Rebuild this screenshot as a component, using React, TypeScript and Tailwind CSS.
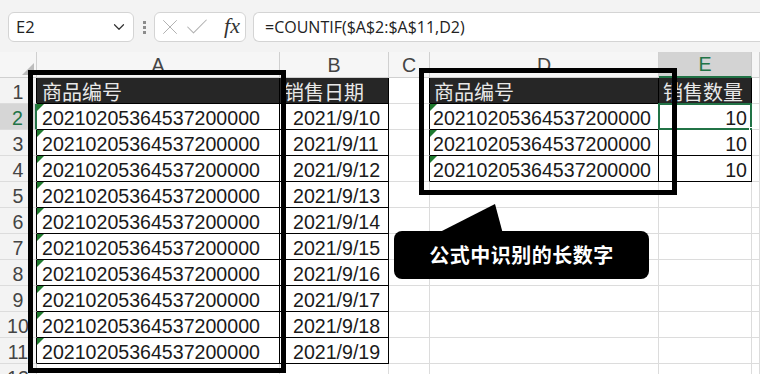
import { Check, ChevronDown, X } from "lucide-react";

const LONG = "20210205364537200000";
const CJK = "font-['Noto_Sans_CJK_SC',sans-serif]";
const NUM = "font-['Liberation_Sans','Noto_Sans_CJK_SC',sans-serif]";

type Col = { key: string; w: string };

const cols: Col[] = [
  { key: "A", w: "w-[243px]" },
  { key: "B", w: "w-[109px]" },
  { key: "C", w: "w-[41px]" },
  { key: "D", w: "w-[229px]" },
  { key: "E", w: "w-[93px]" },
  { key: "F", w: "flex-1" },
];

const rows = [1, 2, 3, 4, 5, 6, 7, 8, 9, 10, 11, 12];

// cells framed by thin black lines in the sheet
function inTable(col: string, r: number) {
  if ((col === "A" || col === "B") && r <= 11) return true;
  if ((col === "D" || col === "E") && r <= 4) return true;
  return false;
}

function nextCol(col: string) {
  const i = cols.findIndex((c) => c.key === col);
  return cols[i + 1]?.key ?? "";
}

function Marker() {
  return (
    <span className="absolute left-0 top-0 h-0 w-0 border-t-[7px] border-r-[7px] border-t-[#1f7a2e] border-r-transparent" />
  );
}

function Cell({ col, r }: { col: Col; r: number }) {
  const black = inTable(col.key, r) || inTable(nextCol(col.key), r);
  const header = r === 1 && col.key !== "C" && col.key !== "F";
  const right = black ? "border-r-black" : "border-r-[#dcdcdc]";
  const bottom = inTable(col.key, r) ? "border-b-black" : "border-b-[#dcdcdc]";

  let content: React.ReactNode = null;
  let align = "justify-start";
  let pad = "pl-[5px]";
  let marker = false;

  if (header) {
    const label = { A: "商品编号", B: "销售日期", D: "商品编号", E: "销售数量" }[col.key];
    content = <span className={`${CJK} text-[20px] leading-none text-[#e8e8e8] pb-[1px]`}>{label}</span>;
    pad = col.key === "A" ? "pl-[5px]" : "pl-[4px]";
  } else if (col.key === "A" && r <= 11) {
    content = LONG;
    marker = true;
  } else if (col.key === "B" && r <= 11) {
    content = `2021/9/${8 + r}`;
    pad = "pl-[13px]";
  } else if (col.key === "D" && r <= 4) {
    content = LONG;
    marker = true;
    pad = "pl-[3px]";
  } else if (col.key === "E" && r <= 4) {
    content = "10";
    align = "justify-end";
    pad = "pr-[4px]";
  }

  return (
    <div
      className={`relative ${col.w} shrink-0 h-[26px] flex items-end ${align} ${pad} border-r border-b ${right} ${bottom} ${
        header ? "bg-[#262626]" : "bg-white"
      } ${NUM} text-[19.6px] leading-none text-[#1a1a1a] overflow-visible whitespace-nowrap`}
    >
      {marker && <Marker />}
      {content}
      {col.key === "E" && r === 2 && (
        <>
          <span className="absolute -left-[1px] -top-[1px] w-[94px] h-[27px] border-2 border-[#217346]" />
          <span className="absolute -right-[4px] -bottom-[4px] w-[6px] h-[6px] bg-[#217346] border border-white" />
        </>
      )}
    </div>
  );
}

function Toolbar() {
  return (
    <div className="h-[52px] bg-[#f3f3f3] flex items-start pt-[12px] pl-[8px] gap-[7px]">
      <div className="w-[126px] h-[30px] bg-white border border-[#d4d4d4] rounded-[6px] flex items-center justify-between pl-[7px] pr-[5px]">
        <span className="font-['Open_Sans',sans-serif] text-[16.5px] text-[#222]">E2</span>
        <ChevronDown size={18} strokeWidth={1.6} className="text-[#333]" />
      </div>
      <div className="w-[6px] h-[30px] flex flex-col items-center justify-center gap-[2px]">
        <span className="w-[3px] h-[3px] bg-[#8c8c8c]" />
        <span className="w-[3px] h-[3px] bg-[#8c8c8c]" />
        <span className="w-[3px] h-[3px] bg-[#8c8c8c]" />
      </div>
      <div className="w-[92px] h-[30px] bg-white border border-[#d4d4d4] rounded-[6px] flex items-center pl-[2px] pr-[5px]">
        <X size={26} strokeWidth={0.9} className="text-[#b0b0b0]" />
        <Check size={28} strokeWidth={0.9} className="text-[#b0b0b0]" />
        <span className="ml-auto font-['Liberation_Serif',serif] italic text-[22px] leading-none text-[#333] pb-[2px]">
          fx
        </span>
      </div>
      <div className="flex-1 h-[30px] bg-white border border-r-0 border-[#d4d4d4] rounded-l-[6px] flex items-center pl-[11px]">
        <span className="font-['Open_Sans',sans-serif] text-[16px] text-[#222]">=COUNTIF($A$2:$A$11,D2)</span>
      </div>
    </div>
  );
}

function ColumnHeaders() {
  return (
    <div className="flex h-[26px] bg-[#f6f6f6]">
      <div className="relative w-[37px] shrink-0 border-r border-b border-[#d0d0d0]">
        <svg className="absolute right-[2px] bottom-[2px]" width="12" height="12" viewBox="0 0 12 12">
          <polygon points="12,0 12,12 0,12" fill="#bcbcbc" />
        </svg>
      </div>
      {cols.map((c) => (
        <div
          key={c.key}
          className={`${c.w} shrink-0 flex items-center justify-center font-['Liberation_Sans',sans-serif] text-[19.6px] leading-none pt-[2px] ${
            c.key === "E"
              ? "bg-[#d3d3d3] text-[#217346] border-b-2 border-b-[#217346] border-r border-r-[#c8c8c8]"
              : "text-[#444] border-b border-b-[#d0d0d0] border-r border-r-[#d0d0d0]"
          }`}
        >
          {c.key === "F" ? "" : c.key}
        </div>
      ))}
    </div>
  );
}

function Row({ r }: { r: number }) {
  const sel = r === 2;
  const rightColor = sel ? "border-r-2 border-r-[#217346]" : r <= 11 ? "border-r border-r-black" : "border-r border-r-[#d0d0d0]";
  return (
    <div className="flex">
      <div
        className={`w-[37px] shrink-0 h-[26px] flex items-end justify-center border-b border-b-[#dcdcdc] ${rightColor} ${
          sel ? "bg-[#d6d6d6] text-[#217346]" : "bg-[#f3f3f3] text-[#444]"
        } font-['Liberation_Sans',sans-serif] text-[19.6px] leading-none overflow-hidden`}
      >
        {r}
      </div>
      {cols.map((c) => (
        <Cell key={c.key} col={c} r={r} />
      ))}
    </div>
  );
}

export default function App() {
  return (
    <div className="relative w-[760px] h-[374px] overflow-hidden bg-white">
      <Toolbar />
      <ColumnHeaders />
      {rows.map((r) => (
        <Row key={r} r={r} />
      ))}

      {/* highlight frames */}
      <div className="absolute left-[28px] top-[70px] w-[258px] h-[303px] border-[5px] border-black pointer-events-none" />
      <div className="absolute left-[419px] top-[68px] w-[258px] h-[127px] border-[5px] border-black pointer-events-none" />

      {/* callout */}
      <svg className="absolute left-[430px] top-[200px]" width="80" height="40" viewBox="0 0 80 40">
        <polygon points="65,4 6,34 73,34" fill="#000" />
      </svg>
      <div className="absolute left-[394px] top-[231px] w-[255px] h-[48px] rounded-[8px] bg-black flex items-center justify-center">
        <span className={`${CJK} text-[20px] font-bold text-white tracking-[0.5px]`}>公式中识别的长数字</span>
      </div>
    </div>
  );
}
